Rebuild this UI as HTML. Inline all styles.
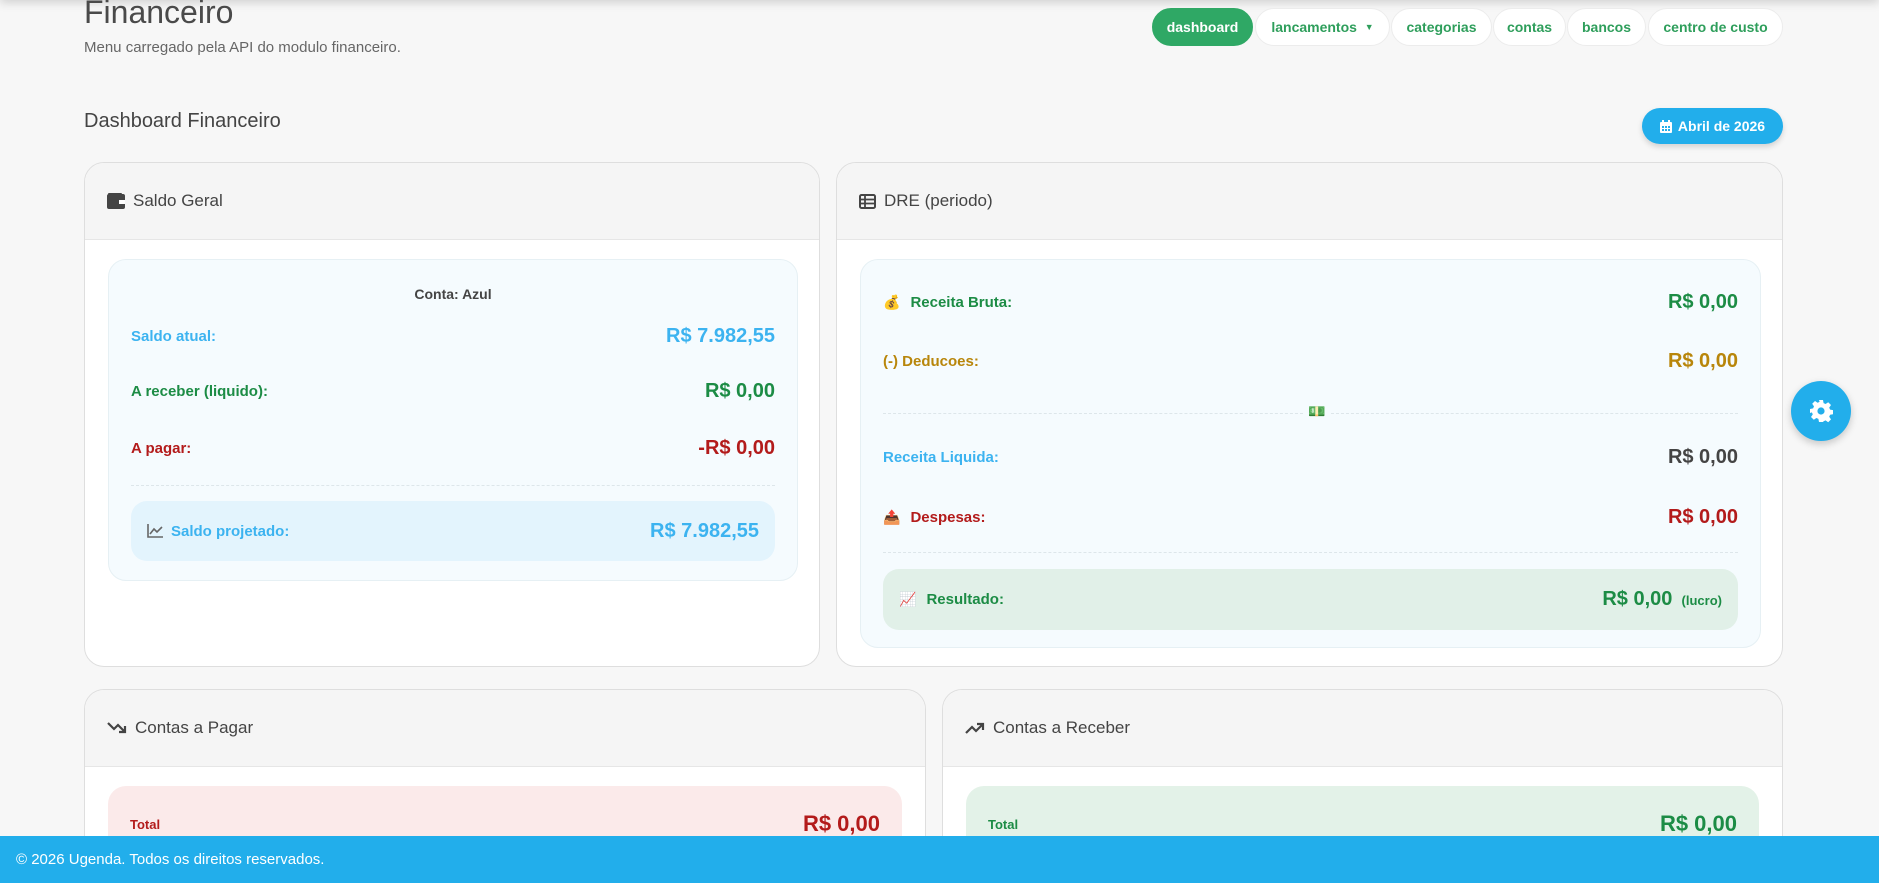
<!DOCTYPE html>
<html style="width:1879px;height:883px;overflow:hidden"><head><meta charset="utf-8"><style>
*{box-sizing:border-box;margin:0;padding:0}
body{width:1879px;height:883px;overflow:hidden;background:#f7f7f7;font-family:"Liberation Sans",sans-serif;position:relative;color:#444}
.a{position:absolute}
.topshadow{left:0;top:-10px;width:1879px;height:10px;box-shadow:0 2px 10px rgba(0,0,0,.18)}
h1{position:absolute;left:84px;top:-6px;font-size:32px;font-weight:normal;color:#4a4a4a}
.sub{left:84px;top:39px;font-size:15px;color:#666}
.pill{top:8px;height:38px;border-radius:19px;background:#fff;border:1px solid #ececec;color:#2e9e5b;font-size:14px;font-weight:bold;display:flex;align-items:center;justify-content:center}
.pill.act{background:#2fa865;color:#fff;border-color:#2fa865}
.h2{left:84px;top:110px;font-size:20px;color:#444}
.date{left:1642px;top:108px;width:141px;height:36px;border-radius:18px;background:#22aeeb;color:#fff;font-weight:bold;font-size:14px;display:flex;align-items:center;justify-content:center;gap:6px;box-shadow:0 3px 6px rgba(0,0,0,.15)}
.card{background:#fff;border:1px solid #dedede;border-radius:20px;overflow:hidden}
.card .hd{position:absolute;left:0;top:0;right:0;height:77px;background:#f5f5f5;border-bottom:1px solid #e6e6e6;display:flex;align-items:center;padding-left:22px;font-size:17px;color:#444;gap:8px}
.inner{background:#f5fbfe;border:1px solid #e6f0f4;border-radius:18px}
.row{display:flex;justify-content:space-between;align-items:center;font-weight:bold}
.l{font-size:15px}.v{font-size:20px}
.blue{color:#3cb3f0}.green{color:#1c8c45}.red{color:#b31b1b}.gold{color:#b8860b}.dark{color:#444}
.dash{border-top:1px dashed #dde6ea;height:0}
.footer{left:0;top:836px;width:1879px;height:47px;background:#22aeeb;color:#fff;font-size:15px;padding-left:16px;display:flex;align-items:center;z-index:5}
.gear{left:1791px;top:381px;width:60px;height:60px;border-radius:50%;background:#22aeeb;box-shadow:0 3px 8px rgba(0,0,0,.2);display:flex;align-items:center;justify-content:center}
.em{font-size:14px;margin-right:10px}
</style></head><body>
<div class="a topshadow"></div>
<h1>Financeiro</h1>
<div class="a sub">Menu carregado pela API do modulo financeiro.</div>

<div class="a pill act" style="left:1152px;width:101px">dashboard</div>
<div class="a pill" style="left:1255px;width:135px">lancamentos&nbsp;&nbsp;<span style="font-size:9px">▼</span></div>
<div class="a pill" style="left:1391px;width:101px">categorias</div>
<div class="a pill" style="left:1493px;width:73px">contas</div>
<div class="a pill" style="left:1567px;width:79px">bancos</div>
<div class="a pill" style="left:1648px;width:135px">centro de custo</div>

<div class="a h2">Dashboard Financeiro</div>
<div class="a date"><svg width="12" height="13" viewBox="0 0 12 13"><rect x="0" y="2" width="12" height="11" rx="1" fill="#fff"/><rect x="2" y="0" width="2" height="3" fill="#fff"/><rect x="8" y="0" width="2" height="3" fill="#fff"/><g fill="#22aeeb"><rect x="2" y="6" width="2" height="2"/><rect x="5" y="6" width="2" height="2"/><rect x="8" y="6" width="2" height="2"/><rect x="2" y="9" width="2" height="2"/><rect x="5" y="9" width="2" height="2"/><rect x="8" y="9" width="2" height="2"/></g></svg>Abril de 2026</div>

<div class="a card" style="left:84px;top:162px;width:736px;height:505px">
<div class="hd"><svg width="18" height="16" viewBox="0 0 18 16"><rect x="0" y="1" width="18" height="15" rx="2" fill="#444"/><rect x="1" y="0" width="14" height="3" rx="1" fill="#444"/><rect x="12" y="7" width="6" height="4" fill="#fff"/></svg>Saldo Geral</div>
<div class="a inner" style="left:23px;top:96px;width:690px;height:322px">
 <div class="a" style="left:0;right:0;top:26px;text-align:center;font-size:14px;font-weight:bold;color:#444">Conta: Azul</div>
 <div class="a row" style="left:22px;right:22px;top:62px;height:28px"><span class="l blue">Saldo atual:</span><span class="v blue">R$ 7.982,55</span></div>
 <div class="a row" style="left:22px;right:22px;top:117px;height:28px"><span class="l green">A receber (liquido):</span><span class="v green">R$ 0,00</span></div>
 <div class="a row" style="left:22px;right:22px;top:174px;height:28px"><span class="l red">A pagar:</span><span class="v red">-R$ 0,00</span></div>
 <div class="a dash" style="left:22px;right:22px;top:225px"></div>
 <div class="a row" style="left:22px;right:22px;top:241px;height:60px;background:#e3f4fd;border-radius:16px;padding:0 16px"><span class="l blue" style="display:flex;align-items:center;gap:8px"><svg width="16" height="14" viewBox="0 0 16 14"><path d="M1 0V13H16" stroke="#666" stroke-width="1.6" fill="none"/><path d="M3 10L7 5L10 8L15 3" stroke="#666" stroke-width="1.6" fill="none"/></svg>Saldo projetado:</span><span class="v blue">R$ 7.982,55</span></div>
</div>
</div>

<div class="a card" style="left:836px;top:162px;width:947px;height:505px">
<div class="hd"><svg width="17" height="15" viewBox="0 0 17 15"><rect x="1" y="1" width="15" height="13" rx="1.5" stroke="#444" stroke-width="2" fill="none"/><path d="M1 5.5H16M1 9.5H16M6 1V14" stroke="#444" stroke-width="1.8"/></svg>DRE (periodo)</div>
<div class="a inner" style="left:23px;top:96px;width:901px;height:389px">
 <div class="a row" style="left:22px;right:22px;top:28px;height:28px"><span class="l green"><span class="em">💰</span>Receita Bruta:</span><span class="v green">R$ 0,00</span></div>
 <div class="a row" style="left:22px;right:22px;top:87px;height:28px"><span class="l gold">(-) Deducoes:</span><span class="v gold">R$ 0,00</span></div>
 <div class="a dash" style="left:22px;width:420px;top:153px"></div>
 <div class="a" style="left:447px;top:143px;font-size:14px">💵</div>
 <div class="a dash" style="left:470px;right:22px;top:153px"></div>
 <div class="a row" style="left:22px;right:22px;top:183px;height:28px"><span class="l blue">Receita Liquida:</span><span class="v dark">R$ 0,00</span></div>
 <div class="a row" style="left:22px;right:22px;top:243px;height:28px"><span class="l red"><span class="em">📤</span>Despesas:</span><span class="v red">R$ 0,00</span></div>
 <div class="a dash" style="left:22px;right:22px;top:292px"></div>
 <div class="a row" style="left:22px;right:22px;top:309px;height:61px;background:#e1f0e8;border-radius:16px;padding:0 16px"><span class="l green"><span class="em">📈</span>Resultado:</span><span class="v green">R$ 0,00 <span style="font-size:13px">&nbsp;(lucro)</span></span></div>
</div>
</div>

<div class="a card" style="left:84px;top:689px;width:842px;height:194px;border-bottom:none;border-radius:20px 20px 0 0">
<div class="hd"><svg width="20" height="14" viewBox="0 0 20 14"><path d="M1 2L7 8L11 4L18 11M18 5V11H12" stroke="#444" stroke-width="2.2" fill="none"/></svg>Contas a Pagar</div>
<div class="a" style="left:23px;top:96px;right:23px;height:120px;background:#fbeaea;border-radius:18px">
 <div class="a row" style="left:22px;right:22px;top:24px;height:28px"><span class="red" style="font-size:13px">Total</span><span class="v red" style="font-size:22px">R$ 0,00</span></div>
</div>
</div>
<div class="a card" style="left:942px;top:689px;width:841px;height:194px;border-bottom:none;border-radius:20px 20px 0 0">
<div class="hd"><svg width="20" height="14" viewBox="0 0 20 14"><path d="M1 12L7 6L11 10L18 3M12 3H18V9" stroke="#444" stroke-width="2.2" fill="none"/></svg>Contas a Receber</div>
<div class="a" style="left:23px;top:96px;right:23px;height:120px;background:#e3f2e8;border-radius:18px">
 <div class="a row" style="left:22px;right:22px;top:24px;height:28px"><span class="green" style="font-size:13px">Total</span><span class="v green" style="font-size:22px">R$ 0,00</span></div>
</div>
</div>

<div class="a gear"><svg width="24" height="24" viewBox="0 0 24 24"><path fill="#fff" d="M10 1h4l.6 3.1 2 .9 2.6-1.8 2.8 2.8-1.8 2.6.9 2 3.1.6v4l-3.1.6-.9 2 1.8 2.6-2.8 2.8-2.6-1.8-2 .9L14 23h-4l-.6-3.1-2-.9-2.6 1.8-2.8-2.8 1.8-2.6-.9-2L1 14v-4l3.1-.6.9-2L3.2 4.8 6 2l2.6 1.8 2-.9z"/><circle cx="12" cy="12" r="3.6" fill="#22aeeb"/></svg></div>

<div class="a footer">© 2026 Ugenda. Todos os direitos reservados.</div>
</body></html>
